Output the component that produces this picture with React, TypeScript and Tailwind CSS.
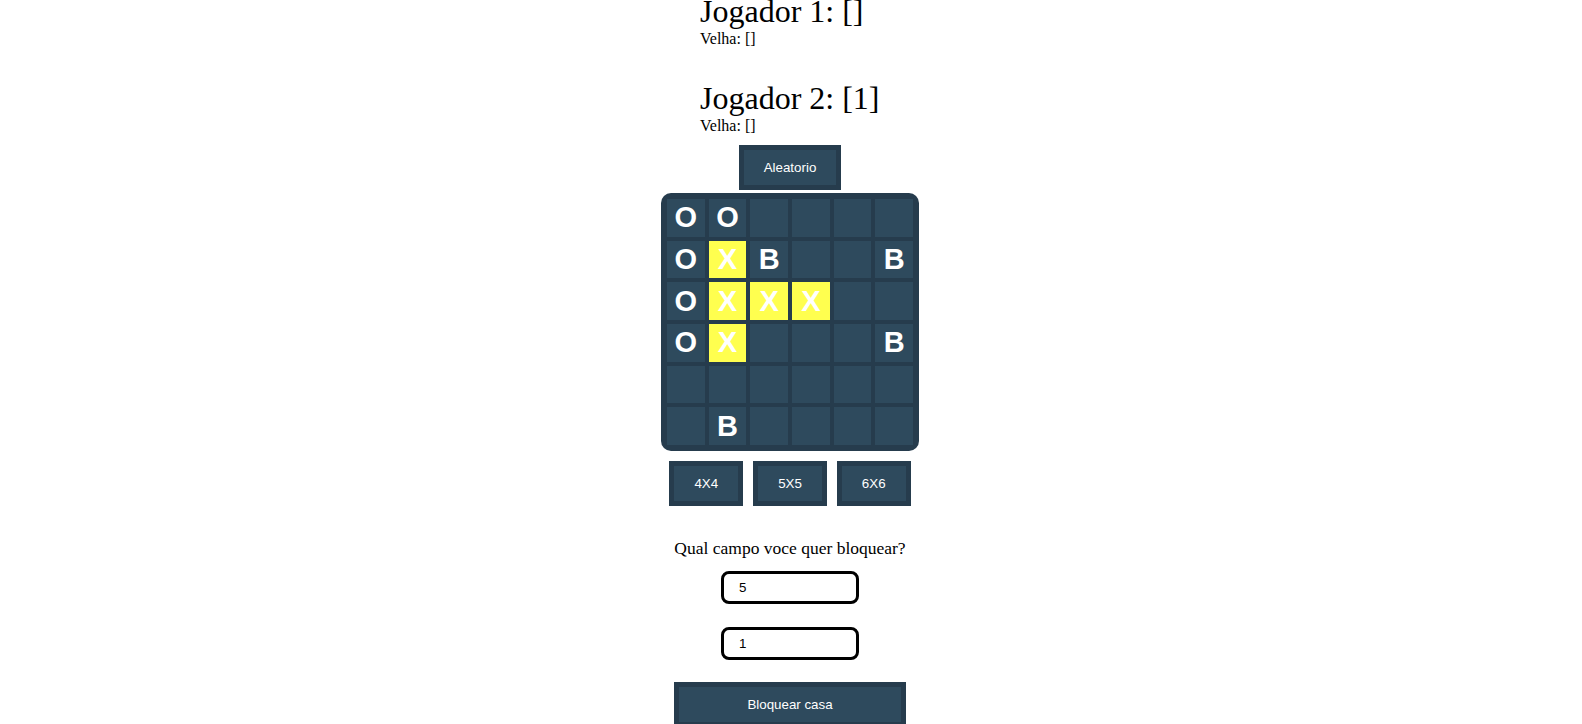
import React from "react";

type Cell = { v: string; y?: boolean };

const rows: Cell[][] = [
  [{ v: "O" }, { v: "O" }, { v: "" }, { v: "" }, { v: "" }, { v: "" }],
  [{ v: "O" }, { v: "X", y: true }, { v: "B" }, { v: "" }, { v: "" }, { v: "B" }],
  [{ v: "O" }, { v: "X", y: true }, { v: "X", y: true }, { v: "X", y: true }, { v: "" }, { v: "" }],
  [{ v: "O" }, { v: "X", y: true }, { v: "" }, { v: "" }, { v: "" }, { v: "B" }],
  [{ v: "" }, { v: "" }, { v: "" }, { v: "" }, { v: "" }, { v: "" }],
  [{ v: "" }, { v: "B" }, { v: "" }, { v: "" }, { v: "" }, { v: "" }],
];

const btn =
  "border-[5px] border-solid border-[#263c4d] bg-[#2e4a5d] text-white text-[13.33px] leading-[15px] py-[10px] px-[20px] font-['Liberation_Sans',Arial,sans-serif]";

export default function App() {
  return (
    <div className="min-h-screen bg-white flex flex-col items-center overflow-hidden text-black pr-[2px]">
      <div className="w-[180px] -mt-[7px] font-['Liberation_Serif','Times_New_Roman',serif]">
        <h1 className="text-[32px] leading-[37px] font-normal whitespace-nowrap">Jogador 1: []</h1>
        <div className="text-[16px] leading-[18px]">Velha: []</div>
        <h1 className="text-[32px] leading-[37px] font-normal mt-[32px] whitespace-nowrap">Jogador 2: [1]</h1>
        <div className="text-[16px] leading-[18px]">Velha: []</div>
      </div>

      <button className={`${btn} mt-[10px]`}>Aleatorio</button>

      <div className="mt-[3px] w-[258px] h-[258px] p-[4px] bg-[#263c4d] rounded-[10px] grid grid-cols-6 grid-rows-6">
        {rows.flat().map((c, i) => (
          <div
            key={i}
            className={`border-2 border-solid border-[#263c4d] flex items-center justify-center text-white font-bold text-[29px] leading-none font-['Liberation_Sans',Arial,sans-serif] ${
              c.y ? "bg-[#ffff4f]" : "bg-[#2e4a5d]"
            }`}
          >
            {c.v}
          </div>
        ))}
      </div>

      <div className="mt-[10px] flex gap-[10px]">
        <button className={btn}>4X4</button>
        <button className={btn}>5X5</button>
        <button className={btn}>6X6</button>
      </div>

      <div className="mt-[32px] flex flex-col items-stretch w-fit">
        <div className="text-[17.5px] leading-[20px] whitespace-nowrap font-['Liberation_Serif','Times_New_Roman',serif] text-center">
          Qual campo voce quer bloquear?
        </div>
        <input
          defaultValue="5"
          className="self-center mt-[13px] w-[138px] h-[33px] border-[3px] border-solid border-black rounded-[8px] pl-[15px] text-[13.33px] font-['Liberation_Sans',Arial,sans-serif] outline-none"
        />
        <input
          defaultValue="1"
          className="self-center mt-[23px] w-[138px] h-[33px] border-[3px] border-solid border-black rounded-[8px] pl-[15px] text-[13.33px] font-['Liberation_Sans',Arial,sans-serif] outline-none"
        />
        <button className={`${btn} mt-[22px] w-full`}>Bloquear casa</button>
      </div>
    </div>
  );
}
